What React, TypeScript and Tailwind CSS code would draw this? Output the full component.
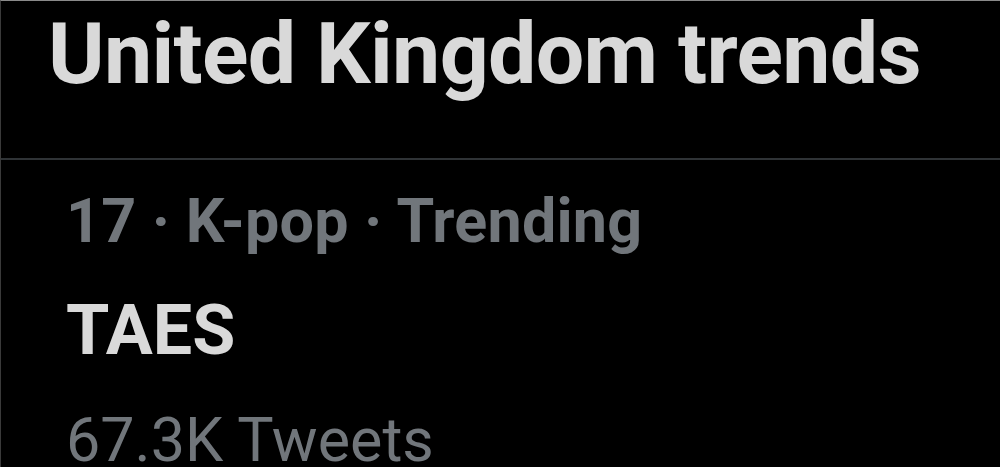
export default function App() {
  return (
    <div
      className="h-[467px] w-[1000px] overflow-hidden border-l border-t border-l-[#3a3a3a] border-t-[#8a8a8a] bg-black"
      style={{ fontFamily: "Roboto, 'Noto Sans', sans-serif" }}
    >
      <header className="h-[159px] border-b-2 border-[#2f3336] pl-[47px] pt-[10px]">
        <h1 className="text-[86px] font-bold leading-none tracking-[-0.7px] text-[#d9d9d9]">
          United Kingdom trends
        </h1>
      </header>
      <section className="pl-[65px] pt-[31px]">
        <p className="text-[61px] font-bold leading-none tracking-[0.2px] text-[#71767b]">17 · K-pop · Trending</p>
        <p className="mt-[43px] text-[70px] font-bold leading-none text-[#d9d9d9]">TAES</p>
        <p className="mt-[45px] text-[61px] leading-none text-[#71767b]">67.3K Tweets</p>
      </section>
    </div>
  );
}
